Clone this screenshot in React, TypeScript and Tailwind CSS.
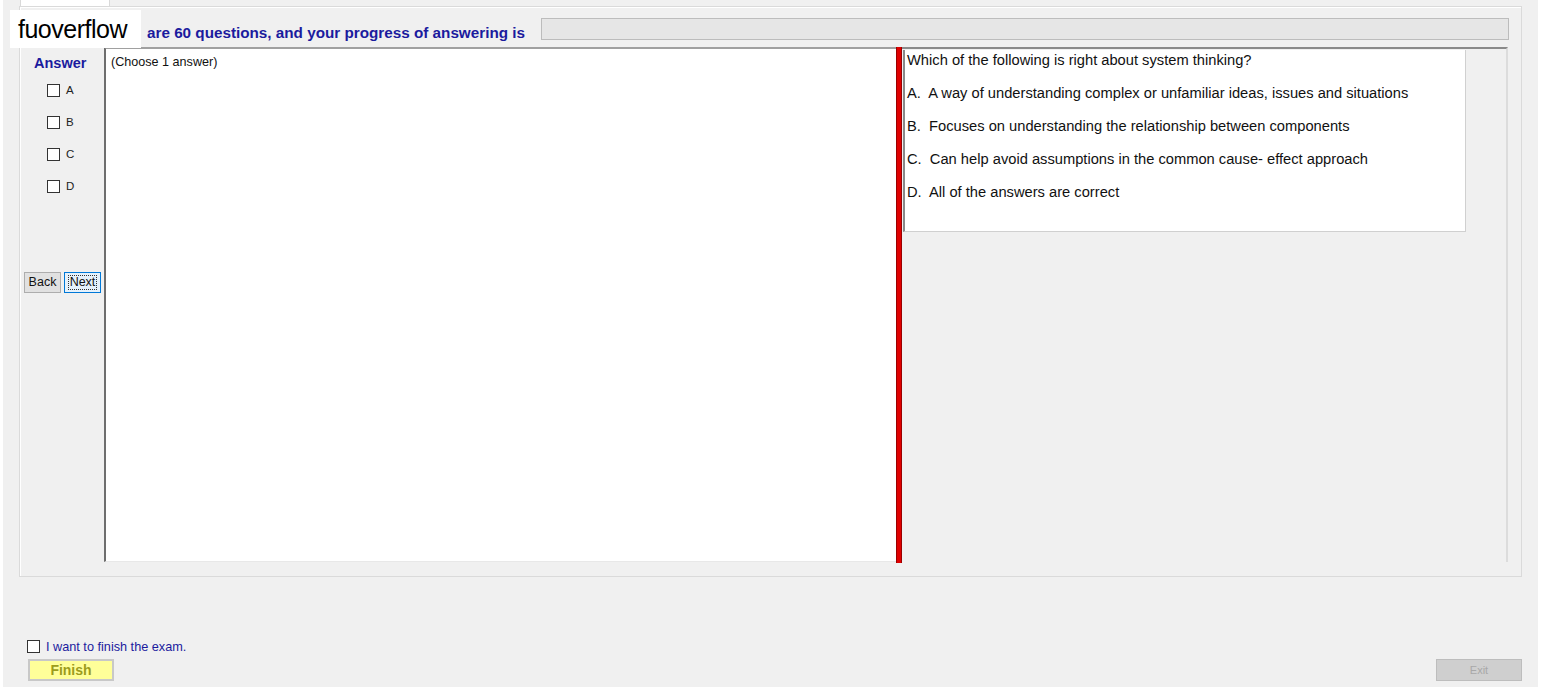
import React from "react";

const font = { fontFamily: '"Liberation Sans", Arial, sans-serif' };

function Box() {
  return <span className="block w-[13px] h-[13px] border border-[#333333] bg-white" />;
}

export default function App() {
  const opts = ["A", "B", "C", "D"];
  return (
    <div className="w-[1542px] h-[690px] bg-white overflow-hidden relative" style={font}>
      <div className="ml-[3px] w-[1535px] h-[687px] bg-[#f0f0f0] flex flex-col">
        {/* tab header */}
        <div className="h-[6px] flex">
          <div className="ml-[17px] w-[90px] h-[6px] bg-white border-x border-[#d9d9d9]" />
        </div>
        {/* tab page */}
        <div className="ml-[16px] w-[1503px] h-[571px] border border-[#dadada] shadow-[inset_1px_1px_0_#ffffff] flex flex-col">
          {/* header row */}
          <div className="h-[40px] flex items-start">
            <div className="ml-[127px] mt-[17px] text-[15.25px] font-bold text-[#1b1b9e] leading-[17px] whitespace-nowrap">
              are 60 questions, and your progress of answering is
            </div>
            <div className="ml-[16px] mt-[11px] w-[968px] h-[22px] bg-[#e6e6e6] border border-[#bcbcbc]" />
          </div>
          {/* content row */}
          <div className="flex h-[515px] ml-[4px]">
            {/* answer column */}
            <div className="w-[80px] flex flex-col">
              <div className="mt-[8px] ml-[10px] text-[14.5px] font-bold text-[#1b1b9e] leading-[16px]">Answer</div>
              <div className="flex flex-col gap-[19px] mt-[13px] ml-[23px]">
                {opts.map((o) => (
                  <div key={o} className="flex items-center gap-[6px] h-[13px]">
                    <Box />
                    <span className="text-[11.5px] text-[#222222] leading-[13px]">{o}</span>
                  </div>
                ))}
              </div>
              <div className="flex gap-[3px] mt-[79px]">
                <button className="w-[37px] h-[21px] bg-[#e1e1e1] border border-[#adadad] text-[12.5px] text-[#111] leading-none">
                  Back
                </button>
                <button className="w-[37px] h-[21px] bg-[#e5f1fb] border border-[#0078d7] text-[12.5px] text-[#111] leading-none flex items-center justify-center">
                  <span className="border border-dotted border-[#333] px-[1px] leading-[13px]">Next</span>
                </button>
              </div>
            </div>
            {/* main white area */}
            <div className="w-[792px] h-[515px] bg-white border-l-2 border-t-2 border-l-[#6e6e6e] border-t-[#a0a0a0] border-b border-b-[#e8e8e8]">
              <div className="ml-[5px] mt-[6px] text-[12.6px] text-[#111] leading-[14px]">(Choose 1 answer)</div>
            </div>
            {/* splitter */}
            <div className="w-[6px] h-[516px] bg-[#e00000] border-x border-[#9a0000]" />
            {/* right pane */}
            <div className="w-[606px] h-[515px] border-t-2 border-t-[#8a8a8a] border-r-2 border-r-[#dcdcdc] flex flex-col">
              <div className="ml-[1px] mt-[1px] w-[563px] h-[182px] bg-white border-l-2 border-l-[#8a8a8a] border-r border-b border-[#d0d0d0] text-[14.7px] text-[#111] leading-[16px] flex flex-col gap-[17px] pl-[2px] pt-[2px]">
                <div>Which of the following is right about system thinking?</div>
                <div>A.&nbsp; A way of understanding complex or unfamiliar ideas, issues and situations</div>
                <div>B.&nbsp; Focuses on understanding the relationship between components</div>
                <div>C.&nbsp; Can help avoid assumptions in the common cause- effect approach</div>
                <div>D.&nbsp; All of the answers are correct</div>
              </div>
            </div>
          </div>
        </div>
        {/* bottom */}
        <div className="flex justify-between items-end h-[108px] pb-[4px]">
          <div className="ml-[24px] flex flex-col gap-[5px]">
            <div className="flex items-center gap-[6px]">
              <Box />
              <span className="text-[12.7px] text-[#1b1b9e] leading-[14px] mt-[2px]">I want to finish the exam.</span>
            </div>
            <button className="ml-[1px] w-[86px] h-[22px] bg-[#ffff99] border-2 border-[#c8c8c8] text-[14px] font-bold text-[#9c9c1c] leading-none">
              Finish
            </button>
          </div>
          <button className="mr-[16px] w-[86px] h-[22px] bg-[#cfcfcf] border border-[#bdbdbd] text-[11px] text-[#a8a8a8] leading-none">
            Exit
          </button>
        </div>
      </div>
      {/* watermark overlay */}
      <div className="absolute left-[10px] top-[10px] w-[131px] h-[38px] bg-white flex items-center pl-[8px] text-[25px] text-black leading-none tracking-[-0.5px]">
        fuoverflow
      </div>
    </div>
  );
}
